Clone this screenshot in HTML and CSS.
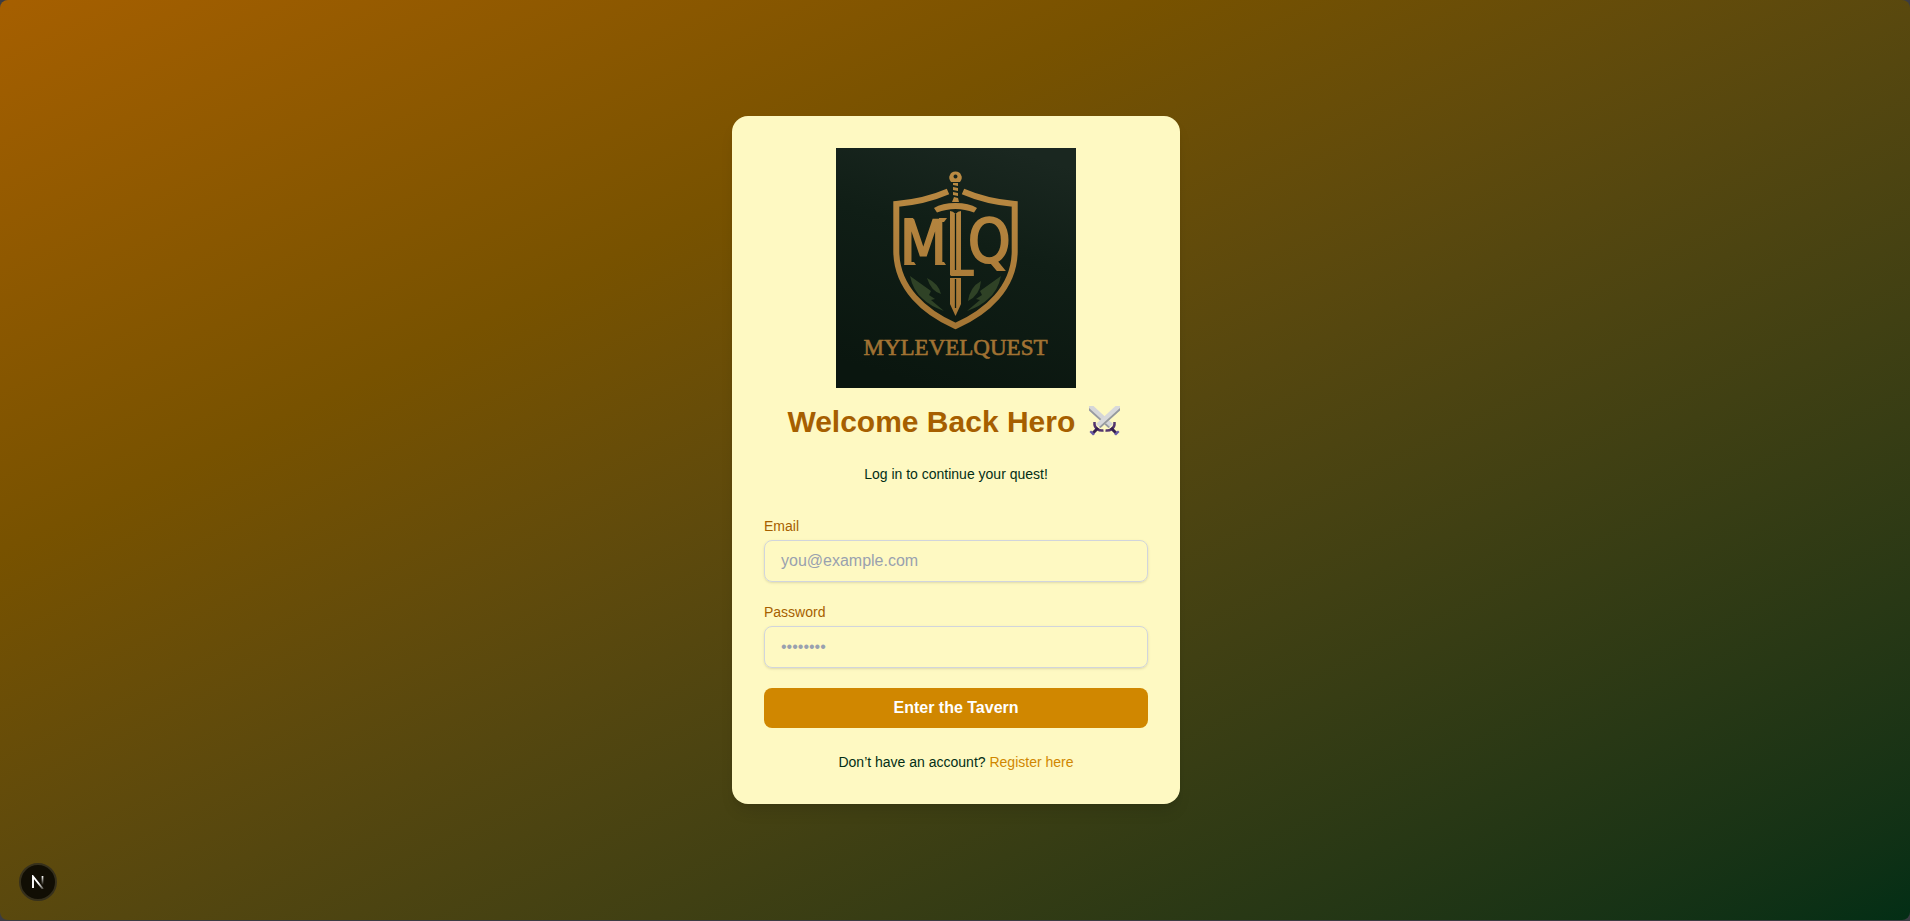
FILE: index.html
```html
<!DOCTYPE html>
<html lang="en">
<head>
<meta charset="utf-8">
<meta name="viewport" content="width=device-width, initial-scale=1">
<title>MyLevelQuest</title>
<link rel="stylesheet" href="styles.css">
</head>
<body>
<main class="page">
  <section class="card">
    <svg class="logo" viewBox="0 0 240 240" role="img" aria-label="MyLevelQuest logo">
      <defs>
        <linearGradient id="night" x1="0.7" y1="0" x2="0.4" y2="1">
          <stop offset="0" stop-color="#1a2720"/>
          <stop offset="0.4" stop-color="#101e16"/>
          <stop offset="1" stop-color="#0a160f"/>
        </linearGradient>
        <linearGradient id="gold" gradientUnits="userSpaceOnUse" x1="0" y1="20" x2="0" y2="215">
          <stop offset="0" stop-color="#bb8b43"/>
          <stop offset="1" stop-color="#9f7031"/>
        </linearGradient>
      </defs>
      <rect width="240" height="240" fill="url(#night)"/>
      <path d="M112 43.5Q89 53.500 60.300 56V104C61 140 88 164 119.500 178C151 164 178 140 178.700 104V56Q150 53.500 127 43.500" fill="none" stroke="url(#gold)" stroke-width="6"/>
      <g fill="#2f4226">
        <path d="M74 128L95 143L93 147L99 151L95 152L108 163Q94 158 87 151Q77 143 74 128Z"/>
        <path d="M91 130Q103 136 105 146Q95 143 91 130Z"/>
        <path d="M165 128L144 143L146 147L140 151L144 152L131 163Q145 158 152 151Q162 143 165 128Z"/>
        <path d="M145 133Q134 139 132 153Q144 147 145 133Z"/>
      </g>
      <g fill="url(#gold)">
        <path fill-rule="evenodd" d="M115 34Q112 30 114 27Q115 23.500 119.500 23.500Q124 23.500 125 27Q127 30 124 34ZM119.500 26.500a2 2 0 1 0 0.010 0Z"/>
        <path d="M117 35H122V38L117 37ZM117 39L122 40V43L117 42ZM117 44L122 45V48L117 47ZM118 49L122 50L123 54H116Z"/>
        <path d="M98 60Q106 55 119.500 55Q133 55 141 60L138 64.500Q129 61 119.500 61Q110 61 101 64.500Z"/>
        <path d="M114 63Q117 63 119.500 66Q122 63 125 63V127H114Z"/>
        <path d="M114 130H125V156L119.500 168L114 156Z"/>
        <path d="M68 70H77V74H72ZM103 70H111L108 74H103ZM68 117L71 114H78L80 117ZM99 117L101 114H108L110 117Z"/>
        <text class="initial" x="64" y="116">M</text>
        <text class="initial initial-mid" x="111" y="127">L</text>
        <text class="initial" x="132" y="114">Q</text>
        <text class="wordmark" x="119.500" y="207" text-anchor="middle">MYLEVELQUEST</text>
      </g>
      <path d="M119.500 66V122M119.500 131V160" stroke="#0d1b13" stroke-width="1.300"/>
    </svg>

    <h1 class="title">Welcome Back Hero
      <svg class="swords" viewBox="0 0 41 30" aria-hidden="true">
        <path d="M5 0H9.500L29 18L24.500 22L5 4.500Z" fill="#d5d6d8"/>
        <path d="M5 2L26 21L24.500 22L5 4.500Z" fill="#989b9f"/>
        <path d="M30.500 16Q31 21 27.500 23Q25.500 25 21.500 24.500" fill="none" stroke="#54366e" stroke-width="2.500"/>
        <path d="M27 22L32 27" stroke="#35204f" stroke-width="3"/>
        <path d="M30 28L34 24.500L35.500 26L32 29.500Z" fill="#6658a6"/>
        <path d="M36 0H31.500L12 18L16.500 22L36 4.500Z" fill="#d8d9db"/>
        <path d="M36 2L15 21L16.500 22L36 4.500Z" fill="#969a9d"/>
        <path d="M10.500 16Q10 21 13.500 23Q15.500 25 19.500 24.500" fill="none" stroke="#54366e" stroke-width="2.500"/>
        <path d="M14 22L9 27" stroke="#35204f" stroke-width="3"/>
        <path d="M11 28L7 24.500L5.500 26L9 29.500Z" fill="#6658a6"/>
      </svg></h1>
    <p class="lead">Log in to continue your quest!</p>

    <form class="form">
      <div class="field">
        <label class="label" for="email">Email</label>
        <input class="input" id="email" type="email" placeholder="you@example.com">
      </div>
      <div class="field">
        <label class="label" for="password">Password</label>
        <input class="input" id="password" type="password" placeholder="••••••••">
      </div>
      <button class="submit" type="submit">Enter the Tavern</button>
    </form>
    <p class="register">Don’t have an account? <a class="link" href="#">Register here</a></p>
  </section>
</main>
<button class="dev-badge" type="button" aria-label="Open developer tools">
  <svg class="dev-icon" viewBox="0 0 14 14" aria-hidden="true">
    <defs>
      <linearGradient id="fade" gradientUnits="userSpaceOnUse" x1="0" y1="1" x2="0" y2="10">
        <stop offset="0" stop-color="#fff"/>
        <stop offset="1" stop-color="#fff" stop-opacity="0"/>
      </linearGradient>
      <linearGradient id="fade-diagonal" gradientUnits="userSpaceOnUse" x1="8" y1="8" x2="13" y2="14">
        <stop offset="0" stop-color="#fff"/>
        <stop offset="1" stop-color="#fff" stop-opacity="0.200"/>
      </linearGradient>
    </defs>
    <path d="M2 13V1.500L12 14" fill="none" stroke="url(#fade-diagonal)" stroke-width="1.900"/>
    <path d="M11.500 1V10" stroke="url(#fade)" stroke-width="1.700"/>
  </svg>
</button>
</body>
</html>
```
FILE: styles.css
```css
* {
  box-sizing: border-box;
}

body {
  margin: 0;
  background: #3b3c43;
  font-family: "Liberation Sans", Arial, sans-serif;
  font-size: 16px;
  line-height: 24px;
}

.page {
  display: flex;
  align-items: center;
  justify-content: center;
  min-height: calc(100vh - 1px);
  padding-left: 2px;
  border-radius: 8px;
  background: linear-gradient(to bottom right in oklab, oklch(55.4% 0.135 66.442), oklch(26.6% 0.065 152.934));
}

.card {
  width: 100%;
  max-width: 448px;
  padding: 32px;
  border-radius: 16px;
  background: #fef9c2;
  color: #032e15;
  text-align: center;
  box-shadow: 0 10px 15px -3px rgb(0 0 0 / 0.1), 0 4px 6px -4px rgb(0 0 0 / 0.1);
}

.logo {
  display: block;
  width: 240px;
  margin: 0 auto 16px;
}

.initial {
  font-family: "DejaVu Sans Condensed", "DejaVu Sans", sans-serif;
  font-size: 60px;
  font-stretch: condensed;
  stroke: url(#gold);
  stroke-width: 2px;
}

.initial-mid {
  font-size: 52px;
}

.wordmark {
  font-family: "Liberation Serif", serif;
  font-size: 23px;
  stroke: url(#gold);
  stroke-width: 0.6px;
}

.title {
  margin: 0 0 24px;
  color: #a65f00;
  font-size: 30px;
  font-weight: 700;
  line-height: 36px;
}

.swords {
  width: 41px;
  height: 30px;
  vertical-align: -4px;
}

.lead,
.register {
  margin: 0;
  font-size: 14px;
  line-height: 20px;
}

.form {
  display: grid;
  gap: 20px;
  margin: 32px 0 24px;
}

.field {
  display: grid;
  gap: 4px;
  text-align: left;
}

.label {
  color: #a65f00;
  font-size: 14px;
  line-height: 20px;
}

.input {
  width: 100%;
  height: 42px;
  padding: 8px 16px;
  border: 1px solid #d1d5dc;
  border-radius: 8px;
  background: transparent;
  color: #032e15;
  font: inherit;
  box-shadow: 0 1px 3px rgb(0 0 0 / 0.1), 0 1px 2px -1px rgb(0 0 0 / 0.1);
}

.input::placeholder {
  color: #99a1af;
}

.submit {
  padding: 8px 16px;
  border: 0;
  border-radius: 8px;
  background: #d08700;
  color: #fff;
  font: inherit;
  font-weight: 700;
  cursor: pointer;
}

.link {
  color: #d08700;
  text-decoration: none;
}

.dev-badge {
  position: fixed;
  bottom: 20px;
  left: 19px;
  display: grid;
  place-items: center;
  width: 38px;
  height: 38px;
  padding: 0;
  border: 2px solid #36301c;
  border-radius: 50%;
  background: #110e04;
}

.dev-icon {
  width: 14px;
  height: 14px;
}
```
